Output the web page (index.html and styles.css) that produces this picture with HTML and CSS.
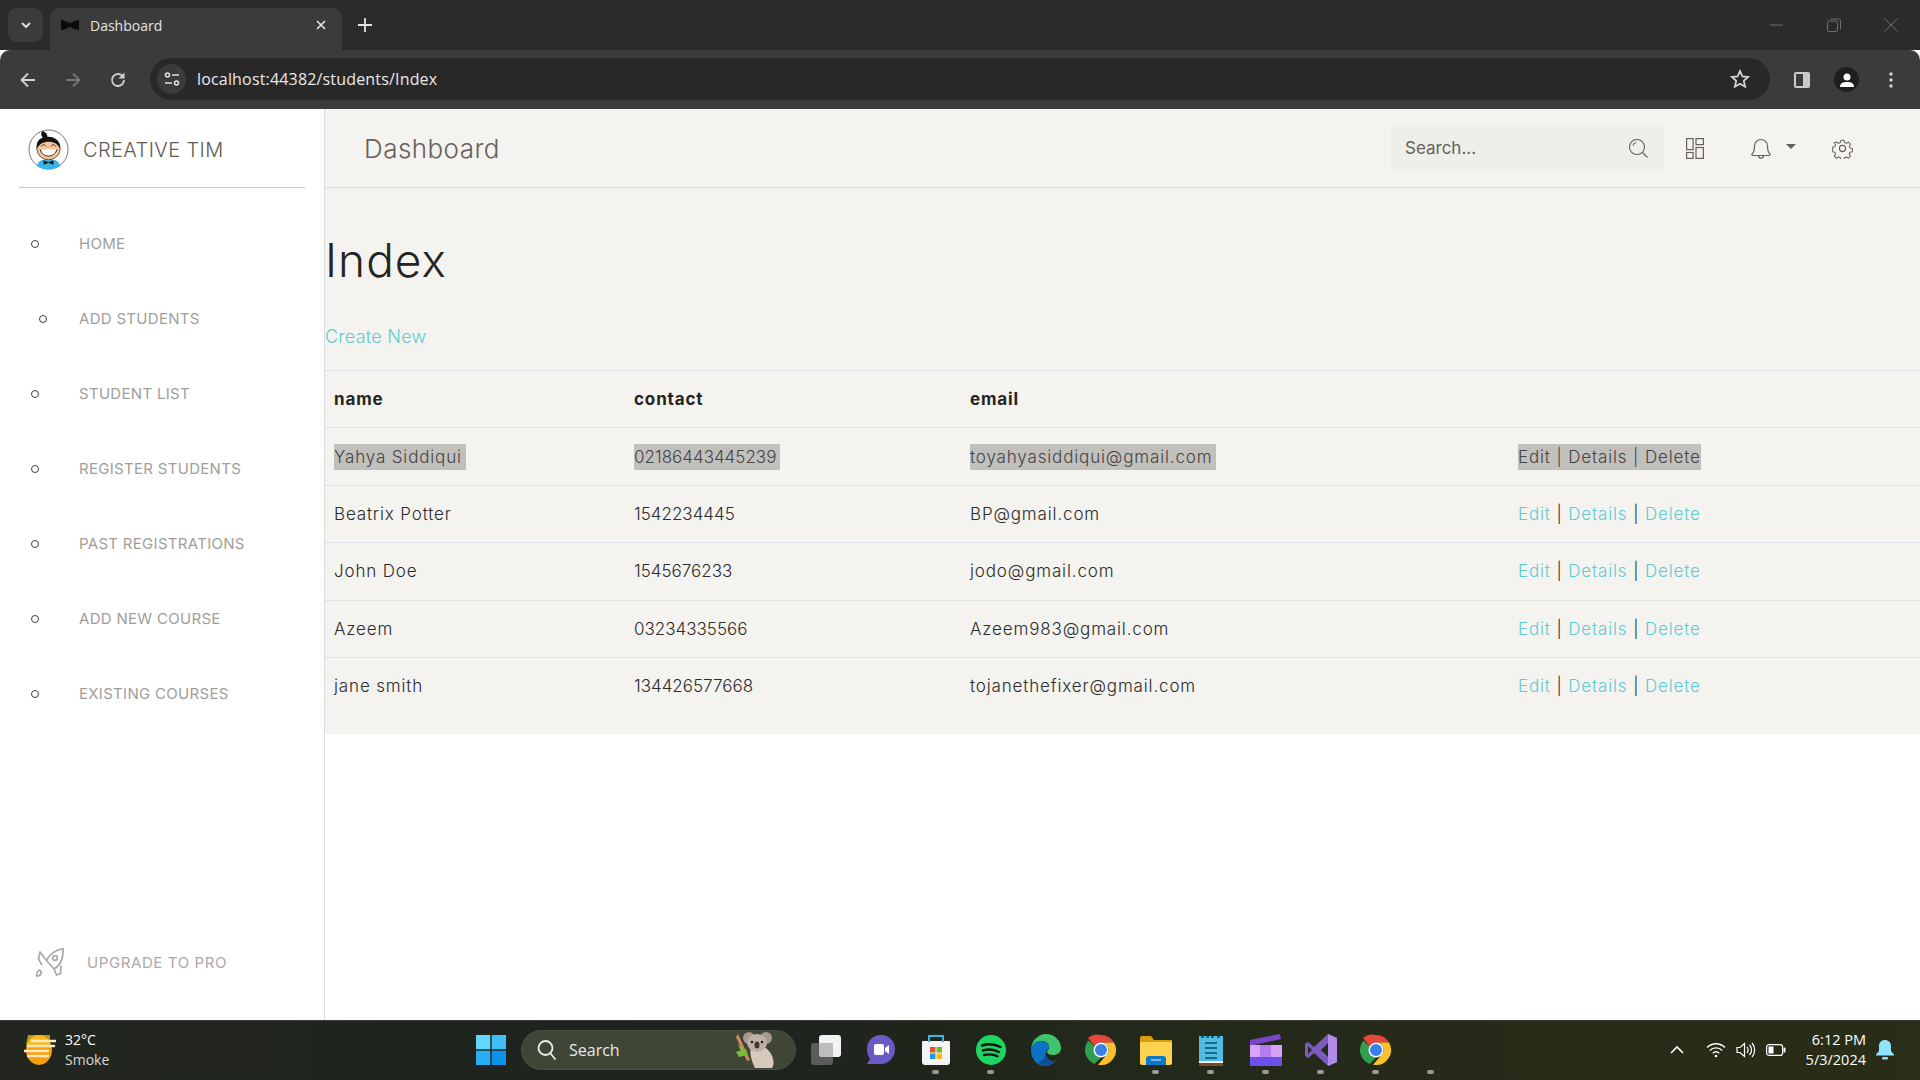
FILE: index.html
```html
<!DOCTYPE html>
<html lang="en">
<head>
    <meta charset="UTF-8">
    <meta name="viewport" content="width=device-width, initial-scale=1.0">
    <title>Dashboard</title>
    <link rel="stylesheet" href="styles.css">
</head>
<body>

<svg class="defs" width="0" height="0">
    <symbol id="chrome" viewBox="0 0 32 32">
        <path d="M16 1a15 15 0 0 1 13 7.500H16a7.500 7.500 0 0 0-6.500 3.750L3 3.900A15 15 0 0 1 16 1z" fill="#e8453c"/>
        <path d="M3.300 6.600 9.500 12.250 16 23.500 9.500 30A15 15 0 0 1 3.300 6.600z" fill="#2f9e4f"/>
        <path d="M29 8.500A15 15 0 0 1 13 30.700L22.500 19.750A7.500 7.500 0 0 0 16 8.500z" fill="#fbc02d"/>
        <circle cx="16" cy="16" r="7.500" fill="#fff"/>
        <circle cx="16" cy="16" r="6" fill="#3b7fe8"/>
    </symbol>
</svg>

<div class="browser-tabs">
    <div class="tab-list-btn">
        <svg width="12" height="12" viewBox="0 0 12 12"><path d="M2 4l4 4 4-4" fill="none" stroke="#e3e3e3" stroke-width="1.800"/></svg>
    </div>
    <div class="tab">
        <svg class="tab-icon" width="18" height="12" viewBox="0 0 18 12"><path d="M0 1c3 0 6 2 9 3 3-1 6-3 9-3v10c-3 0-6-2-9-3-3 1-6 3-9 3z" fill="#0c0c0c"/></svg>
        <span class="tab-title">Dashboard</span>
        <svg width="12" height="12" viewBox="0 0 12 12"><path d="M2 2l8 8M10 2l-8 8" stroke="#e3e3e3" stroke-width="1.600"/></svg>
    </div>
    <svg class="new-tab" width="14" height="14" viewBox="0 0 14 14"><path d="M7 0v14M0 7h14" stroke="#e3e3e3" stroke-width="1.800"/></svg>
    <div class="window-controls">
        <svg width="14" height="14" viewBox="0 0 14 14"><path d="M0 7h13" stroke="#6f6f6f"/></svg>
        <svg width="14" height="14" viewBox="0 0 14 14"><rect x=".5" y="3" width="10" height="10.500" rx="1.500" fill="none" stroke="#6f6f6f"/><path d="M3.500 1h8a2 2 0 0 1 2 2v8" fill="none" stroke="#6f6f6f"/></svg>
        <svg width="14" height="14" viewBox="0 0 14 14"><path d="M.5.500l13 13M13.500.500l-13 13" stroke="#6f6f6f"/></svg>
    </div>
</div>

<div class="browser-toolbar">
    <svg class="tool-icon" width="18" height="18" viewBox="0 0 18 18"><path d="M16 9H3M9 2.500L2.500 9 9 15.500" fill="none" stroke="#d2d2d2" stroke-width="1.800"/></svg>
    <svg class="tool-icon" width="18" height="18" viewBox="0 0 18 18"><path d="M2 9h13M9 2.500L15.500 9 9 15.500" fill="none" stroke="#777" stroke-width="1.800"/></svg>
    <svg class="tool-icon" width="18" height="18" viewBox="0 0 18 18"><path d="M15 9a6 6 0 1 1-1.800-4.300L15 6.500" fill="none" stroke="#d2d2d2" stroke-width="1.800"/><path d="M15.500 1.500v6h-6z" fill="#d2d2d2"/></svg>
    <div class="omnibox">
        <div class="site-info">
            <svg width="16" height="16" viewBox="0 0 16 16"><circle cx="3.500" cy="4" r="2" fill="none" stroke="#e3e3e3" stroke-width="1.500"/><path d="M8 4h7M1 12h7" stroke="#e3e3e3" stroke-width="1.500"/><circle cx="12.500" cy="12" r="2" fill="none" stroke="#e3e3e3" stroke-width="1.500"/></svg>
        </div>
        <span class="url">localhost:44382/students/Index</span>
        <svg class="star" width="20" height="20" viewBox="0 0 20 20"><path d="M10 2l2.400 5.400 5.800.6-4.400 3.900 1.300 5.800L10 14.700l-5.100 3 1.300-5.800L1.800 8l5.800-.6z" fill="none" stroke="#d2d2d2" stroke-width="1.800"/></svg>
    </div>
    <div class="toolbar-right">
        <svg width="18" height="18" viewBox="0 0 18 18"><rect x="1" y="1" width="16" height="16" rx="2" fill="#c9c9c9"/><rect x="3" y="3" width="7" height="12" fill="#3b3b3b"/></svg>
        <div class="avatar">
            <svg width="16" height="16" viewBox="0 0 16 16"><circle cx="8" cy="5" r="3.500" fill="#fff"/><path d="M1 15c0-4 3-5 7-5s7 1 7 5z" fill="#fff"/></svg>
        </div>
        <svg class="menu-dots" width="4" height="18" viewBox="0 0 4 18"><circle cx="2" cy="3" r="1.700" fill="#d2d2d2"/><circle cx="2" cy="9" r="1.700" fill="#d2d2d2"/><circle cx="2" cy="15" r="1.700" fill="#d2d2d2"/></svg>
    </div>
</div>

<div class="app">
    <div class="sidebar">
        <div class="logo">
            <svg width="41" height="41" viewBox="0 0 42 42">
                <circle cx="21" cy="21" r="20" fill="#fff" stroke="#77736f" stroke-width="1"/>
                <path d="M9 38c1-5 5-7 12-7s11 2 12 7c-3 2-7 3.500-12 3.500S12 40 9 38z" fill="#35b6e6"/>
                <path d="M16 32l5 2 5-2v4.500l-5-2-5 2z" fill="#111"/>
                <ellipse cx="21" cy="20" rx="12" ry="11.500" fill="#f6c79a" stroke="#222" stroke-width=".7"/>
                <path d="M9 20C8 12 13 8 20 8c8 0 13 4 13 12-3-5-6-7-12-7-5 0-9 2-12 7z" fill="#111"/>
                <path d="M15 9c-2-3-2-5 0-7 3 1 5 3 5 7z" fill="#111"/>
                <path d="M13.500 18l2.500-2.500 2.500 2.500M23.500 18l2.500-2.500 2.500 2.500" fill="none" stroke="#222" stroke-width=".9"/>
                <path d="M12.500 21c2 9 15 9 17 0" fill="#fff" stroke="#222" stroke-width="1"/>
            </svg>
            <span class="logo-text">CREATIVE TIM</span>
        </div>
        <ul class="nav-list">
            <li class="nav-item"><span class="bullet"></span><a class="nav-link">HOME</a></li>
            <li class="nav-item nav-item-shifted"><span class="bullet"></span><a class="nav-link">ADD STUDENTS</a></li>
            <li class="nav-item"><span class="bullet"></span><a class="nav-link">STUDENT LIST</a></li>
            <li class="nav-item"><span class="bullet"></span><a class="nav-link">REGISTER STUDENTS</a></li>
            <li class="nav-item"><span class="bullet"></span><a class="nav-link">PAST REGISTRATIONS</a></li>
            <li class="nav-item"><span class="bullet"></span><a class="nav-link">ADD NEW COURSE</a></li>
            <li class="nav-item"><span class="bullet"></span><a class="nav-link">EXISTING COURSES</a></li>
        </ul>
        <div class="upgrade">
            <svg width="30" height="30" viewBox="0 0 30 30" fill="none" stroke="#a9a9a9" stroke-width="1.700" stroke-linejoin="round">
                <path d="M28 1.500C21 3 14.500 7 11.500 13.500l7.500 8.500c5.500-3 9.500-10 9-20.500z"/>
                <circle cx="20" cy="11" r="2.300"/>
                <path d="M11.500 13.500 5 5 3.500 12l3.500 6"/>
                <path d="M19 22l2.500 6 4-1.500.5-8"/>
                <path d="M5 23c-2.500.5-3.500 3-3.500 6 2.500 0 4.500-1 5-3.500z"/>
            </svg>
            <span class="upgrade-text">UPGRADE TO PRO</span>
        </div>
    </div>

    <div class="main">
        <div class="navbar">
            <span class="navbar-title">Dashboard</span>
            <div class="navbar-right">
                <div class="search-box">
                    <span class="search-text">Search...</span>
                    <svg width="20" height="20" viewBox="0 0 20 20" fill="none" stroke="#66615b" stroke-width="1.100"><circle cx="9" cy="9" r="7.500"/><path d="M14.500 14.500l5 5M5 7.500A4.500 4.500 0 0 1 8 4.500"/></svg>
                </div>
                <svg class="nav-icon-layout" width="18" height="21" viewBox="0 0 18 21" fill="none" stroke="#66615b" stroke-width="1.200"><rect x=".6" y=".6" width="6.500" height="11"/><rect x="10" y=".6" width="7.400" height="6"/><rect x=".6" y="14.500" width="6.500" height="5.900"/><rect x="10" y="9.500" width="7.400" height="10.900"/></svg>
                <svg class="nav-icon-bell" width="20" height="21" viewBox="0 0 20 21" fill="none" stroke="#66615b" stroke-width="1.200"><path d="M1 16c2-1.500 2.500-3 2.500-8a6.500 6.500 0 0 1 13 0c0 5 .5 6.500 2.500 8 .5 1-.5 1.500-1 1.500H2c-.5 0-1.500-.5-1-1.500z"/><path d="M7.500 17.500c0 3.500 5 3.500 5 0"/></svg>
                <span class="caret"></span>
                <svg class="nav-icon-gear" width="21" height="21" viewBox="0 0 24 24" fill="none" stroke="#66615b" stroke-width="1.300" stroke-linejoin="round"><circle cx="12" cy="12" r="3.500"/><path d="M10 1.500h4l.6 3 2.300 1 2.600-1.700 2.800 2.800-1.700 2.600 1 2.300 3 .6v0l-.1 4-3 .6-1 2.300 1.700 2.600-2.800 2.800-2.600-1.700-2.300 1-.6 2.300h-4l-.6-2.300-2.300-1-2.600 1.700-2.800-2.800 1.700-2.600-1-2.300-2.800-.6V10.500l2.800-.9 1-2.300L1.500 4.700l2.800-1 2.600 1.700 2.500-1z" transform="translate(1.200 1.200) scale(.9)"/></svg>
            </div>
        </div>
        <div class="content">
            <h1 class="page-title">Index</h1>
            <p class="create-row"><a class="link">Create New</a></p>
            <table class="student-table">
                <colgroup>
                    <col class="col-name"><col class="col-contact"><col class="col-email"><col>
                </colgroup>
                <thead>
                    <tr><th>name</th><th>contact</th><th>email</th><th></th></tr>
                </thead>
                <tbody>
                    <tr>
                        <td><span class="selected-text pad-end">Yahya Siddiqui</span></td>
                        <td class="cell-number"><span class="selected-text pad-end">02186443445239</span></td>
                        <td><span class="selected-text pad-end">toyahyasiddiqui@gmail.com</span></td>
                        <td><span class="selected-text">Edit | Details | Delete</span></td>
                    </tr>
                    <tr>
                        <td>Beatrix Potter</td>
                        <td class="cell-number">1542234445</td>
                        <td>BP@gmail.com</td>
                        <td><a class="link">Edit</a> | <a class="link">Details</a> | <a class="link">Delete</a></td>
                    </tr>
                    <tr>
                        <td>John Doe</td>
                        <td class="cell-number">1545676233</td>
                        <td>jodo@gmail.com</td>
                        <td><a class="link">Edit</a> | <a class="link">Details</a> | <a class="link">Delete</a></td>
                    </tr>
                    <tr>
                        <td>Azeem</td>
                        <td class="cell-number">03234335566</td>
                        <td>Azeem983@gmail.com</td>
                        <td><a class="link">Edit</a> | <a class="link">Details</a> | <a class="link">Delete</a></td>
                    </tr>
                    <tr>
                        <td>jane smith</td>
                        <td class="cell-number">134426577668</td>
                        <td>tojanethefixer@gmail.com</td>
                        <td><a class="link">Edit</a> | <a class="link">Details</a> | <a class="link">Delete</a></td>
                    </tr>
                </tbody>
            </table>
        </div>
    </div>
</div>

<div class="taskbar">
    <div class="weather">
        <svg width="32" height="30" viewBox="0 0 32 30">
            <ellipse cx="15" cy="15" rx="13" ry="15" fill="#f59e0b"/>
            <path d="M4 0h22v10H2z" fill="#fcc419" opacity=".7"/>
            <path d="M8 6h24M4 11h26M0 16h24M4 21h20" stroke="#fde9bf" stroke-width="2.500" stroke-linecap="round"/>
        </svg>
        <div class="weather-text">
            <span class="weather-temp">32°C</span>
            <span class="weather-desc">Smoke</span>
        </div>
    </div>
    <div class="start-btn">
        <svg width="30" height="30" viewBox="0 0 30 30">
            <rect width="14.300" height="14.300" fill="#63d7fb"/>
            <rect x="15.700" width="14.300" height="14.300" fill="#3ec0f7"/>
            <rect y="15.700" width="14.300" height="14.300" fill="#27aff5"/>
            <rect x="15.700" y="15.700" width="14.300" height="14.300" fill="#0f93ea"/>
        </svg>
    </div>
    <div class="task-search">
        <svg width="20" height="22" viewBox="0 0 20 22" fill="none" stroke="#eee" stroke-width="1.800"><circle cx="8.500" cy="9" r="7"/><path d="M13.500 14.500l5 6"/></svg>
        <span class="task-search-text">Search</span>
        <svg class="koala" width="44" height="36" viewBox="0 0 44 36">
            <path d="M3 2l12 26-3 1L1 5z" fill="#c98a5d"/>
            <path d="M1 20l10-3 2 6-9 2zM3 12l6 6-3 2z" fill="#7dbb3c"/>
            <path d="M16 16c7-4 17-2 21 8 2 5 2 9 0 12H20c-3-6-6-14-4-20z" fill="#d8c9bd"/>
            <circle cx="14" cy="6" r="6" fill="#a9988f"/>
            <circle cx="31" cy="6" r="6" fill="#a9988f"/>
            <ellipse cx="22" cy="11" rx="10" ry="9" fill="#bfb0a6"/>
            <ellipse cx="22" cy="13" rx="2.500" ry="3.500" fill="#3e3533"/>
            <circle cx="17" cy="10" r="1.300" fill="#222"/><circle cx="27" cy="10" r="1.300" fill="#222"/>
        </svg>
    </div>
    <div class="task-apps">
        <div class="app-icon">
            <svg width="30" height="30" viewBox="0 0 30 30"><rect y="8" width="22" height="22" rx="3" fill="#5c5c5c"/><rect x="8" width="22" height="22" rx="3" fill="#f2f2f2"/><path d="M8 8h14v14H11a3 3 0 0 1-3-3z" fill="#bdbdbd"/></svg>
        </div>
        <div class="app-icon">
            <svg width="30" height="32" viewBox="0 0 30 32"><path d="M15 1c8 0 14 6 14 14s-6 15-14 15H1l3-5C2 22 1 19 1 15 1 7 7 1 15 1z" fill="#6a5bc4"/><rect x="8" y="10" width="10" height="11" rx="2" fill="#fff"/><path d="M19 14l4-3v9l-4-3z" fill="#fff"/></svg>
        </div>
        <div class="app-icon app-open">
            <svg width="30" height="32" viewBox="0 0 30 32"><path d="M2 7h26a1 1 0 0 1 1 1v20a3 3 0 0 1-3 3H4a3 3 0 0 1-3-3V8a1 1 0 0 1 1-1z" fill="#f4f4f4"/><path d="M8 8V2h14v6" fill="none" stroke="#35b6e6" stroke-width="2"/><rect x="9" y="13" width="5.500" height="5.500" fill="#e8502d"/><rect x="15.500" y="13" width="5.500" height="5.500" fill="#7ab51d"/><rect x="9" y="19.500" width="5.500" height="5.500" fill="#1e9be6"/><rect x="15.500" y="19.500" width="5.500" height="5.500" fill="#fbb813"/></svg>
        </div>
        <div class="app-icon app-open">
            <svg width="30" height="30" viewBox="0 0 30 30"><circle cx="15" cy="15" r="15" fill="#1ed760"/><path d="M6 10.500c6-2 13-1.500 18.500 1.500M7 15.500c5-1.500 11-1 16 1.500M8 20c4.500-1 9.500-.8 13.500 1.300" fill="none" stroke="#111" stroke-width="2.400" stroke-linecap="round"/></svg>
        </div>
        <div class="app-icon">
            <svg width="32" height="32" viewBox="0 0 32 32"><path d="M1 16C1 7 8 0 16 0c9 0 15 7 15 14 0 5-4 7-8 7-3 0-6-1-6-3 1-2 2-2 2-5 0-3-3-6-7-6C7 7 1 11 1 16z" fill="#3ec46d"/><path d="M1 16c0-6 6-10 11-9 4 1 7 3 7 6 0 2-2 3-3 5-1 3 1 8 6 9 1 0 3 0 4-1-3 4-7 6-11 6C7 32 1 25 1 16z" fill="#0c72c4"/><path d="M16 18c-1 3 1 8 6 9 1 0 3 0 4-1-3 4-7 6-11 6-4 0-6-2-7-5 2 1 6 0 8-9z" fill="#0f4f99"/></svg>
        </div>
        <div class="app-icon">
            <svg width="32" height="32"><use href="#chrome"/></svg>
        </div>
        <div class="app-icon app-open">
            <svg width="32" height="30" viewBox="0 0 32 30"><path d="M0 3a2 2 0 0 1 2-2h9l3 4h18v8H0z" fill="#d99e0b"/><path d="M0 7h32v21a2 2 0 0 1-2 2H2a2 2 0 0 1-2-2z" fill="#ffd34d"/><path d="M6 30v-6a3 3 0 0 1 3-3h14a3 3 0 0 1 3 3v6z" fill="#0f78c9"/><path d="M11 25h10" stroke="#8ecbf0" stroke-width="1.500"/></svg>
        </div>
        <div class="app-icon app-open">
            <svg width="24" height="32" viewBox="0 0 24 32"><rect y="2" width="24" height="28" fill="#52bce0"/><path d="M0 27h24v2H0z" fill="#eee"/><path d="M0 29h24v3H0z" fill="#7a4a2a"/><path d="M2 3a1.500 1.500 0 0 1 3 0v1H2zM7 3a1.500 1.500 0 0 1 3 0v1H7zM12 3a1.500 1.500 0 0 1 3 0v1h-3zM18 3a1.500 1.500 0 0 1 3 0v1h-3z" fill="#0d5f86"/><path d="M6 9h12M6 14h12M6 19h12M6 24h12" stroke="#0e6c94" stroke-width="1.800"/></svg>
        </div>
        <div class="app-icon app-open">
            <svg width="32" height="32" viewBox="0 0 32 32"><path d="M0 6L30 0l1 5L0 12z" fill="#7a45c9"/><path d="M0 11h32v19a2 2 0 0 1-2 2H2a2 2 0 0 1-2-2z" fill="#b57cf0"/><path d="M0 11h10v12H0zM21 11h11v12H21z" fill="#d9a2f7"/><path d="M0 23h32v7a2 2 0 0 1-2 2H2a2 2 0 0 1-2-2z" fill="#6b51e8"/></svg>
        </div>
        <div class="app-icon app-open">
            <svg width="32" height="32" viewBox="0 0 32 32"><path d="M23 0l9 4v24l-9 4-14-13-6 5-3-2V10l3-2 6 5z" fill="#7b5cbc"/><path d="M23 0l9 4v24l-9 4z" fill="#b08ce8"/><path d="M23 9v14l-7-7z" fill="#242820"/><path d="M3 12l4 4-4 4z" fill="#242820"/></svg>
        </div>
        <div class="app-icon app-open">
            <svg width="32" height="32"><use href="#chrome"/></svg>
        </div>
        <div class="app-icon app-open"></div>
    </div>
    <div class="tray">
        <svg class="tray-chevron" width="14" height="10" viewBox="0 0 14 10"><path d="M1 8l6-6 6 6" fill="none" stroke="#fff" stroke-width="1.600"/></svg>
        <svg class="tray-wifi" width="20" height="16" viewBox="0 0 20 16" fill="none" stroke="#fff" stroke-width="1.300"><path d="M1 5.500c5-5 13-5 18 0M3.800 8.500c3.500-3.500 9-3.500 12.500 0M6.700 11.300c2-2 4.600-2 6.600 0"/><circle cx="10" cy="14" r="1.300" fill="#fff" stroke="none"/></svg>
        <svg class="tray-sound" width="20" height="16" viewBox="0 0 20 16" fill="none" stroke="#fff" stroke-width="1.200"><path d="M1 5.500h3l4.500-4v13L4 10.500H1z"/><path d="M11 5c1.500 2 1.500 4 0 6M13.500 3c2.500 3 2.500 7 0 10M16 1c3.500 4 3.500 10 0 14"/></svg>
        <svg class="tray-battery" width="20" height="12" viewBox="0 0 20 12"><rect x=".6" y=".6" width="16" height="10.800" rx="2.500" fill="none" stroke="#fff" stroke-width="1.200"/><rect x="2.500" y="2.500" width="5" height="7" fill="#fff"/><rect x="17.500" y="3.500" width="2" height="5" rx="1" fill="#fff"/></svg>
        <div class="clock">
            <span>6:12 PM</span>
            <span>5/3/2024</span>
        </div>
        <svg class="tray-bell" width="18" height="20" viewBox="0 0 18 20"><path d="M9 0c3.500 0 6 2.500 6 6v5l3 3.500v1H0v-1L3 11V6c0-3.500 2.500-6 6-6z" fill="#8fe3ff"/><rect x="6" y="17" width="6" height="2.500" rx="1.200" fill="#8fe3ff"/></svg>
    </div>
</div>

</body>
</html>
```

FILE: styles.css
```css
* {
    box-sizing: border-box;
}
html, body {
    height: 100%;
}
body {
    margin: 0;
    display: flex;
    flex-direction: column;
    height: 100vh;
    overflow: hidden;
    font-family: Inter, "Open Sans", sans-serif;
    background: #fff;
}
.defs {
    position: absolute;
}

/* browser frame */
.browser-tabs {
    flex: none;
    height: 50px;
    background: #2b2b2b;
    display: flex;
    align-items: flex-end;
    padding-left: 8px;
    font-family: "Open Sans", sans-serif;
}
.tab-list-btn {
    width: 35px;
    height: 34px;
    margin-bottom: 8px;
    background: #3b3b3b;
    border-radius: 9px;
    display: flex;
    align-items: center;
    justify-content: center;
}
.tab {
    width: 292px;
    height: 42px;
    margin-left: 7px;
    padding: 0 15px 8px 11px;
    background: #3b3b3b;
    border-radius: 10px 10px 0 0;
    display: flex;
    align-items: center;
    color: #e3e3e3;
}
.tab-icon {
    flex: none;
}
.tab-title {
    flex: 1;
    margin-left: 11px;
    font-size: 14px;
}
.new-tab {
    margin: 0 0 18px 16px;
}
.window-controls {
    margin-left: auto;
    height: 50px;
    display: flex;
    align-items: center;
    padding-right: 22px;
    gap: 43px;
}
.browser-toolbar {
    flex: none;
    height: 59px;
    background: #3b3b3b;
    border-radius: 10px 10px 0 0;
    display: flex;
    align-items: center;
    padding-left: 19px;
    gap: 27px;
}
.tool-icon {
    flex: none;
}
.omnibox {
    width: 1620px;
    height: 42px;
    margin-left: -4px;
    margin-top: -1px;
    background: #282828;
    border-radius: 21px;
    display: flex;
    align-items: center;
    padding: 0 20px 0 7px;
}
.site-info {
    width: 29px;
    height: 30px;
    border-radius: 50%;
    background: #3b3b3b;
    display: flex;
    align-items: center;
    justify-content: center;
}
.url {
    margin-left: 11px;
    font-family: "Open Sans", sans-serif;
    font-size: 16px;
    letter-spacing: .17px;
    color: #e8e8e8;
}
.star {
    margin-left: auto;
}
.toolbar-right {
    display: flex;
    align-items: center;
    margin-left: -4px;
    gap: 23px;
}
.menu-dots {
    margin-left: 7px;
}
.avatar {
    width: 25px;
    height: 25px;
    border-radius: 50%;
    background: #1e1e1e;
    display: flex;
    align-items: center;
    justify-content: center;
}

/* app */
.app {
    flex: 1;
    min-height: 0;
    display: flex;
}
.sidebar {
    flex: none;
    width: 325px;
    border-right: 1px solid #ddd;
    background: #fff;
    display: flex;
    flex-direction: column;
}
.logo {
    height: 79px;
    margin: 0 19px;
    padding: 3px 0 0 9px;
    border-bottom: 1px solid #c8c8c8;
    display: flex;
    align-items: center;
    gap: 14px;
}
.logo-text {
    font-size: 20px;
    font-weight: 300;
    letter-spacing: .4px;
    color: #5f5a54;
}
.nav-list {
    list-style: none;
    margin: 18px 0 0;
    padding: 0;
}
.nav-item {
    height: 75px;
    display: grid;
    grid-template-columns: 79px 1fr;
    align-items: center;
}
.bullet {
    width: 8px;
    height: 8px;
    margin-left: 31px;
    border: 1.5px solid #3f3f3f;
    border-radius: 50%;
}
.nav-item-shifted .bullet {
    margin-left: 39px;
}
.nav-link {
    font-size: 15px;
    letter-spacing: .3px;
    color: #a09e9b;
}
.upgrade {
    margin-top: auto;
    height: 116px;
    padding-left: 35px;
    display: flex;
    align-items: center;
    gap: 22px;
}
.upgrade-text {
    font-size: 15px;
    letter-spacing: .6px;
    color: #a9a9a9;
}
.main {
    flex: 1;
    min-width: 0;
    background: #fff;
}
.navbar {
    height: 79px;
    background: #f4f3ef;
    border-bottom: 1px solid #ddd;
    display: flex;
    align-items: center;
    padding-left: 39px;
}
.navbar-title {
    font-size: 26px;
    font-weight: 350;
    letter-spacing: .45px;
    color: #66615b;
}
.navbar-right {
    margin-left: auto;
    display: flex;
    align-items: center;
    padding-right: 67px;
}
.search-box {
    width: 273px;
    height: 48px;
    background: #eeeeeb;
    border-radius: 4px;
    display: flex;
    align-items: center;
    justify-content: space-between;
    padding: 0 16px 0 14px;
}
.search-text {
    font-size: 17px;
    color: #66615b;
}
.nav-icon-layout {
    margin-left: 22px;
}
.nav-icon-bell {
    margin-left: 47px;
}
.caret {
    margin: -4px 0 0 15px;
    border-left: 5px solid transparent;
    border-right: 5px solid transparent;
    border-top: 5px solid #66615b;
}
.nav-icon-gear {
    margin-left: 36px;
}
.content {
    background: #f4f3ef;
    padding: 45px 0 19px;
    color: #2c2c2c;
}
.page-title {
    margin: 0;
    font-size: 46px;
    font-weight: 300;
    line-height: 54px;
    letter-spacing: 1px;
    color: #252422;
}
.create-row {
    margin: 38px 0 21px;
    font-size: 18px;
    font-weight: 350;
    line-height: 24px;
    letter-spacing: .25px;
}
.link {
    color: #5fcbd1;
}
.student-table {
    width: 100%;
    table-layout: fixed;
    border-collapse: collapse;
    font-size: 17px;
    font-weight: 350;
    letter-spacing: .85px;
}
.col-name {
    width: 300px;
}
.col-contact {
    width: 336px;
}
.col-email {
    width: 548px;
}
.student-table th,
.student-table td {
    height: 57.4px;
    padding: 0 9px;
    border-top: 1px solid #dee2e6;
    text-align: left;
    vertical-align: middle;
}
.student-table th {
    font-weight: 700;
    color: #252422;
}
.student-table .cell-number {
    letter-spacing: 0;
}
.selected-text {
    display: inline-block;
    line-height: 26px;
    background: #c2c0bd;
    color: #444;
}
.pad-end {
    padding-right: 4px;
}

/* windows taskbar */
.taskbar {
    flex: none;
    height: 60px;
    padding-bottom: 2px;
    background: linear-gradient(90deg, #22261f 0%, #1f231e 40%, #23291a 60%, #2a2d17 100%);
    border-top: 1px solid #3a3a3a;
    display: flex;
    align-items: center;
    font-family: "Open Sans", sans-serif;
    color: #fff;
}
.weather {
    flex: none;
    width: 461px;
    padding-left: 24px;
    display: flex;
    align-items: center;
    gap: 9px;
}
.weather-text {
    display: flex;
    flex-direction: column;
    font-size: 14px;
    line-height: 20px;
}
.weather-desc {
    color: #d8d8d8;
}
.start-btn {
    flex: none;
    width: 60px;
    display: flex;
    justify-content: center;
}
.task-search {
    flex: none;
    width: 275px;
    height: 40px;
    background: #3f4636;
    border: 1px solid #4a5040;
    border-radius: 20px;
    display: flex;
    align-items: center;
    padding-left: 15px;
}
.task-search-text {
    margin-left: 12px;
    font-size: 16px;
    color: #e8e8e8;
}
.koala {
    margin-left: auto;
    margin-right: 16px;
}
.task-apps {
    display: flex;
    margin-left: 2px;
}
.app-icon {
    width: 55px;
    height: 57px;
    display: flex;
    align-items: center;
    justify-content: center;
    position: relative;
}
.app-open::after {
    content: "";
    position: absolute;
    bottom: 4px;
    left: 50%;
    width: 7px;
    height: 4px;
    margin-left: -3.5px;
    border-radius: 2px;
    background: #9a9a9a;
}
.tray {
    margin-left: auto;
    display: flex;
    align-items: center;
    padding-right: 26px;
}
.tray-wifi {
    margin-left: 22px;
}
.tray-sound {
    margin-left: 10px;
}
.tray-battery {
    margin-left: 10px;
}
.clock {
    margin-left: 20px;
    display: flex;
    flex-direction: column;
    align-items: flex-end;
    font-size: 14.5px;
    line-height: 20px;
}
.tray-bell {
    margin-left: 10px;
}
```
